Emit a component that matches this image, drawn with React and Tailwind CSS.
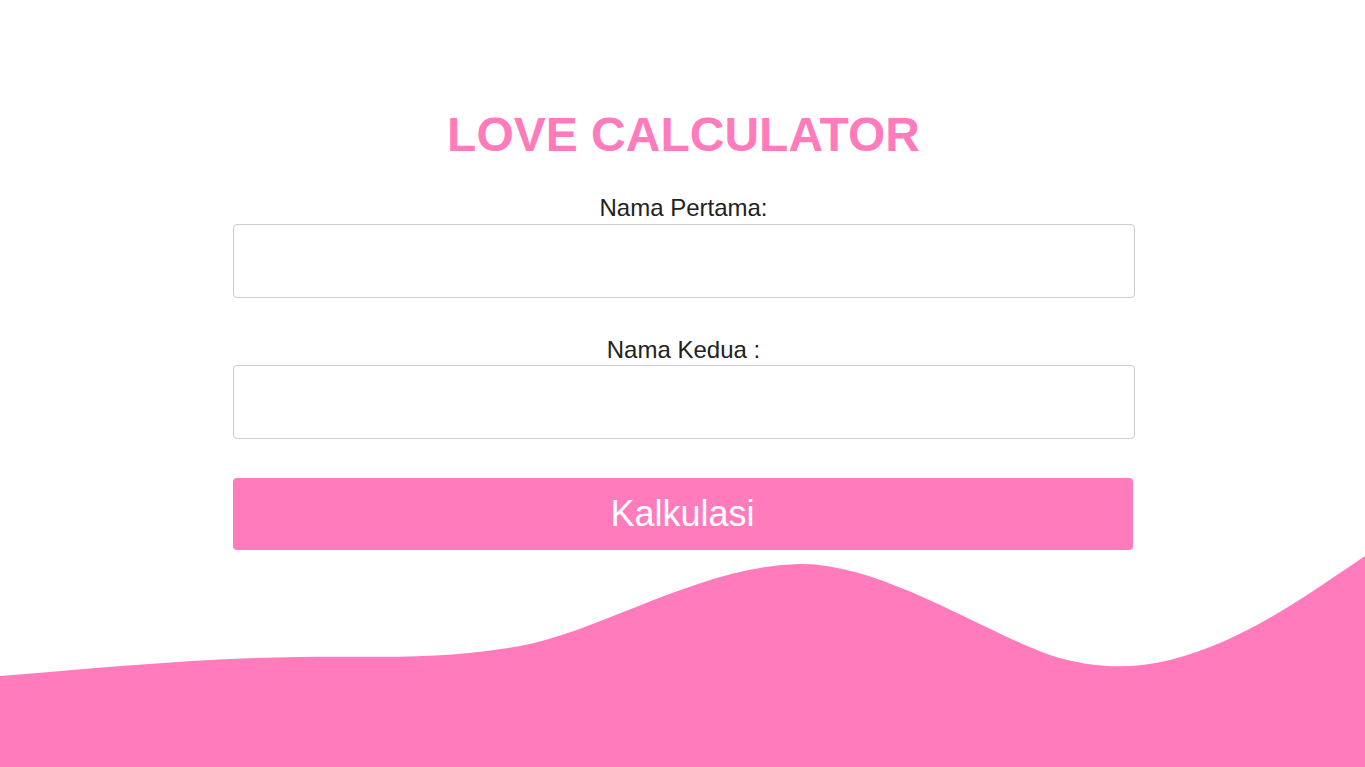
export default function App() {
  return (
    <div className="relative min-h-screen w-full overflow-hidden bg-white" style={{ fontFamily: '"Liberation Sans", Arial, sans-serif' }}>
      <svg
        className="absolute bottom-0 left-0 h-[212px] w-full"
        viewBox="0 555 1365 212"
        preserveAspectRatio="none"
      >
        <path
          d="M0,676 C100,668 200,658 300,657 C380,656 440,660 520,646 C600,632 700,566 800,564 C880,563 980,630 1050,655 C1090,668 1130,670 1170,660 C1240,643 1300,600 1365,556 L1365,767 L0,767 Z"
          fill="#ff7bbc"
        />
      </svg>
      <div className="relative flex flex-col items-center pl-[2px] pt-[107px]">
        <h1 className="text-[48px] font-bold leading-[56px] text-[#ff7bbc]">LOVE CALCULATOR</h1>
        <form className="mt-[33px] flex w-[902px] flex-col items-center" onSubmit={(e) => e.preventDefault()}>
          <label className="mb-[4px] text-[24px] leading-[24px] text-[#222]">Nama Pertama:</label>
          <input type="text" className="h-[74px] w-[902px] rounded-[4px] border border-[#cccccc] bg-white px-3 text-[22px] outline-none" />
          <label className="mb-[3px] mt-[40px] text-[24px] leading-[24px] text-[#222]">Nama Kedua :</label>
          <input type="text" className="h-[74px] w-[902px] rounded-[4px] border border-[#cccccc] bg-white px-3 text-[22px] outline-none" />
          <button type="submit" className="mt-[39px] mr-[2px] h-[72px] w-[900px] rounded-[4px] bg-[#ff7bbc] text-[36px] leading-none text-white">
            Kalkulasi
          </button>
        </form>
      </div>
    </div>
  );
}
